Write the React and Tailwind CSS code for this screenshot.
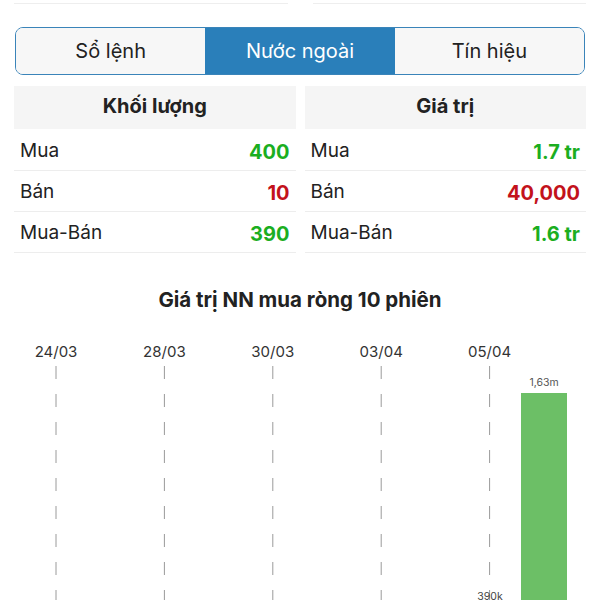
import React from 'react';

const rowsVolume = [
  { label: 'Mua', value: '400', tone: 'up' },
  { label: 'Bán', value: '10', tone: 'down' },
  { label: 'Mua-Bán', value: '390', tone: 'up' },
];

const rowsValue = [
  { label: 'Mua', value: '1.7 tr', tone: 'up' },
  { label: 'Bán', value: '40,000', tone: 'down' },
  { label: 'Mua-Bán', value: '1.6 tr', tone: 'up' },
];

const tabs = ['Sổ lệnh', 'Nước ngoài', 'Tín hiệu'];

const StatTable = ({ title, rows }) => (
  <div className="flex-1 flex flex-col">
    <div className="h-[43px] pb-[4px] mb-[1px] bg-[#f5f5f5] flex items-center justify-center text-[20px] font-bold text-[#222]">
      {title}
    </div>
    {rows.map((r) => (
      <div key={r.label} className="h-[41px] pt-[3px] border-b border-[#ededed] flex items-center justify-between px-[6px]">
        <span className="text-[19px] text-[#222]">{r.label}</span>
        <span className={`text-[20px] font-bold ${r.tone === 'up' ? 'text-[#1bae1f]' : 'text-[#c3121b]'}`}>{r.value}</span>
      </div>
    ))}
  </div>
);

const sessions = ['24/03', '27/03', '28/03', '29/03', '30/03', '31/03', '03/04', '04/04', '05/04', '06/04'];

const NetChart = () => {
  const step = 54.2;
  const x0 = 56;
  return (
    <svg width="600" height="340" className="block">
      {sessions.map((d, i) =>
        i % 2 === 0 ? (
          <g key={d}>
            <text x={x0 + step * i} y="23" textAnchor="middle" fontSize="15" fill="#333">{d}</text>
            <line x1={x0 + step * i} y1="32" x2={x0 + step * i} y2="330" stroke="#9a9a9a" strokeWidth="1" strokeDasharray="13 15" />
          </g>
        ) : null
      )}
      <rect x="521" y="59" width="46" height="280" fill="#6cbf66" />
      <text x="544" y="52" textAnchor="middle" fontSize="10.5" fill="#555">1,63m</text>
      <text x="490" y="266" textAnchor="middle" fontSize="10.5" fill="#444">390k</text>
    </svg>
  );
};

export default function App() {
  return (
    <div className="w-[600px] bg-white font-['Inter',sans-serif] text-[#222]">
      <div className="flex justify-between px-[14px]">
        <div className="w-[274px] h-[4px] border-b border-[#eeeeee]" />
        <div className="w-[273px] h-[4px] border-b border-[#eeeeee]" />
      </div>

      <div className="mx-[15px] mt-[23px] h-[48px] flex rounded-[8px] border-[1.5px] border-[#3a84b9] overflow-hidden">
        {tabs.map((t, i) => (
          <div
            key={t}
            className={`flex-1 flex items-center justify-center text-[20px] ${i === 1 ? 'bg-[#2a7fba] text-white' : 'bg-[#f7f7f7] text-[#222]'}`}
          >
            {t}
          </div>
        ))}
      </div>

      <div className="flex gap-[9px] px-[14px] mt-[11px]">
        <StatTable title="Khối lượng" rows={rowsVolume} />
        <StatTable title="Giá trị" rows={rowsValue} />
      </div>

      <div className="mt-[32px] text-center text-[20.5px] font-bold text-[#222]">Giá trị NN mua ròng 10 phiên</div>

      <div className="mt-[18px]">
        <NetChart />
      </div>
    </div>
  );
}
